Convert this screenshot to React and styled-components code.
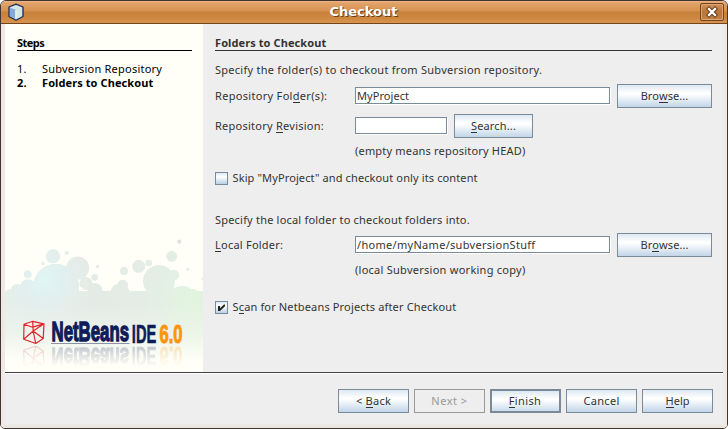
import React from "react";
import styled, { createGlobalStyle, css } from "styled-components";

const GlobalStyle = createGlobalStyle`
  body { margin: 0; background: #fff; }
  * { box-sizing: border-box; }
`;

const Window = styled.div`
  width: 728px;
  height: 429px;
  display: flex;
  flex-direction: column;
  background: #eeeeee;
  border: 1px solid #40352f;
  border-radius: 6px 6px 5px 5px;
  overflow: hidden;
  font: 11px/16px "Noto Sans", "Open Sans", sans-serif;
  color: #333333;
`;

const TitleBar = styled.header`
  height: 23px;
  flex: none;
  display: grid;
  grid-template-columns: 28px 1fr 28px;
  align-items: center;
  padding-left: 6px;
  padding-right: 3px;
  background: linear-gradient(#efb68a 0, #e2a36b 2px, #d6914f 10px, #c8813b 11px, #cd8741 17px, #d9954f 22px);
  border-bottom: 1px solid #75461c;
`;

const Title = styled.h1`
  margin: 0;
  text-align: center;
  font: bold 13px/16px "DejaVu Sans", sans-serif;
  color: #fff;
  text-shadow: 1px 1px 0 #6b3f16;
  padding-right: 4px;
`;

const CloseButton = styled.button`
  width: 24px;
  height: 18px;
  justify-self: end;
  padding: 0;
  display: grid;
  place-items: center;
  border: 1px solid #74461d;
  border-radius: 2px;
  background: linear-gradient(#d39257, #b9763a 50%, #c58143);
  box-shadow: inset 0 0 0 1px #dfa473;
`;

const Frame = styled.div`
  flex: 1;
  display: flex;
  flex-direction: column;
  border-left: 4px solid #efe8e5;
  border-right: 4px solid #efe9e4;
  border-bottom: 3px solid #ebe5df;
  box-shadow: inset 0 -1px 0 #ede8e3;
`;

const Body = styled.main`
  height: 348px;
  display: flex;
`;

const Sidebar = styled.aside`
  width: 198px;
  display: flex;
  flex-direction: column;
  background: #fffff7;
  color: #000;
`;

const SidebarContent = styled.div`
  flex: 1;
  padding: 12px 11px 0 12px;
`;

const Panel = styled.section`
  flex: 1;
  padding: 12px 11px 0 12px;
`;

const Text = styled.span`
  white-space: pre;
  letter-spacing: ${(p) => p.$track ?? 0.2}px;
  u { text-decoration: none; border-bottom: 1px solid currentColor; display: inline-block; line-height: 12px; height: 13px; }
`;

const Heading = styled.h2`
  margin: 0;
  height: 15px;
  font-size: 11px;
  line-height: 14px;
  font-weight: bold;
  border-bottom: 1px solid currentColor;
`;

const StepList = styled.ol`
  margin: 11px 0 0;
  padding: 0;
  list-style: none;
`;

const Step = styled.li`
  display: grid;
  grid-template-columns: 25px 1fr;
  height: 14px;
  line-height: 14px;
  font-weight: ${(p) => (p.$current ? "bold" : "normal")};
`;

const Line = styled.div`
  height: 16px;
  margin-top: ${(p) => p.$gap}px;
  padding-left: ${(p) => (p.$hint ? 140 : 0)}px;
`;

const FieldRow = styled.div`
  display: flex;
  align-items: center;
  height: 24px;
  margin-top: ${(p) => p.$gap}px;
`;

const FieldLabel = styled.label`
  width: 140px;
  line-height: 24px;
`;

const Field = styled.div`
  width: ${(p) => p.$width}px;
  height: 17px;
  margin: 0 7px 1px 0;
  padding-left: 1px;
  line-height: 16px;
  background: #fff;
  border: 1px solid #7a8a99;
  box-shadow: 1px 1px 0 #fff;
`;

const FieldText = styled(Text)`
  display: block;
`;

const Button = styled.button`
  width: ${(p) => p.$width ?? 71}px;
  height: 24px;
  flex: none;
  padding: 0 0 1px;
  font: inherit;
  line-height: 21px;
  color: #333;
  border: 1px solid #7a8a99;
  background: linear-gradient(#dde8f3 0, #ffffff 8px, #ffffff 9px, #b8cfe5 24px);
  ${(p) => p.$primary && css`
    border-width: 2px;
    padding: 0 1px 1px 0;
    line-height: 19px;
  `}
  &:disabled {
    color: #999;
    border-color: #999;
    background: #eeeeee;
  }
`;

const CheckRow = styled.label`
  display: flex;
  align-items: center;
  gap: 4.5px;
  height: 16px;
  margin-top: ${(p) => p.$gap}px;
`;

const Box = styled.span`
  width: 13px;
  height: 13px;
  border: 1px solid #7a8a99;
  background: linear-gradient(#dde8f3, #ffffff 35%, #b8cfe5);
  display: block;
`;

const Check = styled.svg`
  display: block;
  width: 11px;
  height: 11px;
`;

const Footer = styled.footer`
  flex: 1;
  display: flex;
  justify-content: flex-end;
  gap: 5px;
  padding: 16px 10px 0 0;
  border-top: 1px solid #404040;
  box-shadow: inset 0 1px 0 #fff;
`;

const Art = styled.svg`
  display: block;
  flex: none;
`;

const bubbles = [
  [48, 21.3, 7], [61.7, 18, 2], [38, 28.3, 1.5], [22.7, 39.3, 3.8], [72.7, 33, 11.5],
  [51, 52, 23], [92.7, 31.7, 1.6], [89.7, 42.3, 3.4], [81, 48.5, 6.5], [90, 55.5, 7.5],
  [23, 52.5, 8], [12, 55, 6], [4, 57, 3], [174.3, 6.7, 2.1], [166.7, 21.3, 5.5],
  [133.7, 31.3, 6.5], [143.7, 28, 3.3], [119, 36, 4], [182.7, 34.3, 1.6], [117.7, 50, 5.3],
  [115, 58, 9.5], [154, 46, 16], [169, 40, 5.2], [177, 65, 14], [188, 60, 6], [198, 44, 1.5],
];

function Logo() {
  return (
    <g fontFamily="'Liberation Sans', Arial, sans-serif" fontWeight="bold">
      <path
        d="M19 89.2 27.7 86.3 39 88.8 38.2 103.5 30.7 108.5 18.7 104.3ZM19 89.2 27.5 92.2 39 88.8M27.7 86.3 28.2 96M28.2 96 38.2 103.5M28.2 96 30.7 108.5M28.2 96 18.7 104.3M28.2 96 39 88.8"
        fill="none" stroke="#e3222b" strokeWidth="1.2" strokeLinejoin="round"
      />
      <text x="46.5" y="106.3" fontSize="28.5" textLength="77.5" lengthAdjust="spacingAndGlyphs" fill="#0f1c58" stroke="#0f1c58" strokeWidth="1.4">NetBeans</text>
      <text x="126.8" y="108" fontSize="26" textLength="24.5" lengthAdjust="spacingAndGlyphs" fill="#0f1c58" stroke="#0f1c58" strokeWidth=".6">IDE</text>
      <text x="154.5" y="107.7" fontSize="26" textLength="23" lengthAdjust="spacingAndGlyphs" fill="#ff9408" stroke="#ff9408" strokeWidth="1">6.0</text>
    </g>
  );
}

function SidebarArt() {
  return (
    <Art width="198" height="137" viewBox="0 0 198 137">
      <defs>
        <linearGradient id="tint" gradientUnits="userSpaceOnUse" x1="0" y1="0" x2="198" y2="0">
          <stop offset="0" stopColor="#e5efea" />
          <stop offset=".5" stopColor="#e4ebe6" />
          <stop offset=".8" stopColor="#e3eee4" />
          <stop offset="1" stopColor="#e3f1de" />
        </linearGradient>
        <radialGradient id="cyan" gradientUnits="userSpaceOnUse" cx="40" cy="45" r="45">
          <stop offset="0" stopColor="#e0f7f4" />
          <stop offset=".45" stopColor="#e1f0f1" stopOpacity=".8" />
          <stop offset="1" stopColor="#e4efeb" stopOpacity="0" />
        </radialGradient>
        <radialGradient id="mint" gradientUnits="userSpaceOnUse" cx="182" cy="68" r="44">
          <stop offset="0" stopColor="#e2f5df" />
          <stop offset="1" stopColor="#e3f0e4" stopOpacity="0" />
        </radialGradient>
        <linearGradient id="fade" gradientUnits="userSpaceOnUse" x1="0" y1="70" x2="0" y2="126">
          <stop offset="0" stopColor="#fffff7" stopOpacity="0" />
          <stop offset=".5" stopColor="#fffff7" stopOpacity=".3" />
          <stop offset="1" stopColor="#fffff7" />
        </linearGradient>
        <linearGradient id="mirror" gradientUnits="userSpaceOnUse" x1="0" y1="111" x2="0" y2="132">
          <stop offset="0" stopColor="#fff" stopOpacity=".22" />
          <stop offset="1" stopColor="#fff" stopOpacity="0" />
        </linearGradient>
        <mask id="mirrorMask" maskUnits="userSpaceOnUse" x="0" y="111" width="198" height="26">
          <rect y="111" width="198" height="26" fill="url(#mirror)" />
        </mask>
        <clipPath id="cloud">
          <rect y="56" width="198" height="81" />
          {bubbles.map(([x, y, r]) => <circle key={`${x}-${y}`} cx={x} cy={y} r={r} />)}
        </clipPath>
      </defs>
      <g clipPath="url(#cloud)">
        <rect width="198" height="137" fill="url(#tint)" />
        <rect width="198" height="137" fill="url(#cyan)" />
        <rect width="198" height="137" fill="url(#mint)" />
        <rect y="70" width="198" height="67" fill="url(#fade)" />
        <circle cx="174.3" cy="6.7" r="2.1" fill="#e0e1dd" />
      </g>
      <path d="M75 52l4 2v2h-4z" fill="#fffff7" />
      <Logo />
      <path d="M46 108.5h78.5" stroke="#8b95a8" />
      <g mask="url(#mirrorMask)">
        <g transform="translate(0 219.5) scale(1 -1)"><Logo /></g>
      </g>
    </Art>
  );
}

export default function App() {
  return (
    <>
      <GlobalStyle />
      <Window>
        <TitleBar>
          <svg width="18" height="18" viewBox="0 0 18 18">
            <path d="M9 1.2 16 4v9.5l-7 3.7-7-3.7V4z" fill="#b8d0ea" stroke="#202b50" strokeWidth="1.3" strokeLinejoin="round" />
            <path d="M3 4.7 9 2.3l6 2.4-6 2z" fill="#d5e5ec" />
            <path d="M3 4.7 8.6 6.8v9L3 12.9z" fill="#83a9dc" />
            <path d="M9 6.8 15 4.7v8.2l-6 3z" fill="#d3e8e2" />
            <path d="M8.8 6.8v9" stroke="#f5fafc" />
          </svg>
          <Title>Checkout</Title>
          <CloseButton aria-label="Close">
            <svg width="12" height="12" viewBox="0 0 12 12">
              <path d="m3 3 6 6m0-6L3 9" stroke="#633a17" strokeWidth="4.4" strokeLinecap="square" />
              <path d="m3 3 6 6m0-6L3 9" stroke="#fff" strokeWidth="2.3" strokeLinecap="square" />
            </svg>
          </CloseButton>
        </TitleBar>
        <Frame>
          <Body>
            <Sidebar>
              <SidebarContent>
                <Heading><Text $track={-0.55}>Steps</Text></Heading>
                <StepList>
                  <Step><Text>1.</Text><Text $track={0.22}>Subversion Repository</Text></Step>
                  <Step $current><Text>2.</Text><Text $track={0.09}>Folders to Checkout</Text></Step>
                </StepList>
              </SidebarContent>
              <SidebarArt />
            </Sidebar>
            <Panel>
              <Heading><Text $track={0.09}>Folders to Checkout</Text></Heading>
              <Line $gap={11}><Text $track={0.26}>Specify the folder(s) to checkout from Subversion repository.</Text></Line>
              <FieldRow $gap={6}>
                <FieldLabel><Text $track={0.31}>Repository Fol<u>d</u>er(s):</Text></FieldLabel>
                <Field $width={255}><FieldText $track={0.06}>MyProject</FieldText></Field>
                <Button $width={95}><Text $track={0.07}>Bro<u>w</u>se...</Text></Button>
              </FieldRow>
              <FieldRow $gap={6}>
                <FieldLabel><Text $track={0.25}>Repository <u>R</u>evision:</Text></FieldLabel>
                <Field $width={92} />
                <Button $width={79}><Text $track={0.16}><u>S</u>earch...</Text></Button>
              </FieldRow>
              <Line $hint $gap={5}><Text $track={0.19}>(empty means repository HEAD)</Text></Line>
              <CheckRow $gap={11}><Box /><Text $track={0.12}>Skip "MyProject" and checkout only its content</Text></CheckRow>
              <Line $gap={26}><Text $track={0.2}>Specify the local folder to checkout folders into.</Text></Line>
              <FieldRow $gap={5}>
                <FieldLabel><Text $track={0.23}><u>L</u>ocal Folder:</Text></FieldLabel>
                <Field $width={255}><FieldText $track={0.3}>/home/myName/subversionStuff</FieldText></Field>
                <Button $width={95}><Text $track={0.07}>Br<u>o</u>wse...</Text></Button>
              </FieldRow>
              <Line $hint $gap={5}><Text $track={0.26}>(local Subversion working copy)</Text></Line>
              <CheckRow $gap={21}>
                <Box>
                  <Check viewBox="0 0 11 11"><path d="M2 4h2v2.2L8 2.5h1v1.8L4 9H2z" fill="#222" /></Check>
                </Box>
                <Text $track={0.15}>S<u>c</u>an for Netbeans Projects after Checkout</Text>
              </CheckRow>
            </Panel>
          </Body>
          <Footer>
            <Button><Text $track={0.25}>{"< "}<u>B</u>ack</Text></Button>
            <Button disabled><Text $track={0.5}>{"Next >"}</Text></Button>
            <Button $primary><Text $track={0.4}><u>F</u>inish</Text></Button>
            <Button><Text $track={0.32}>Cancel</Text></Button>
            <Button><Text $track={0}><u>H</u>elp</Text></Button>
          </Footer>
        </Frame>
      </Window>
    </>
  );
}
